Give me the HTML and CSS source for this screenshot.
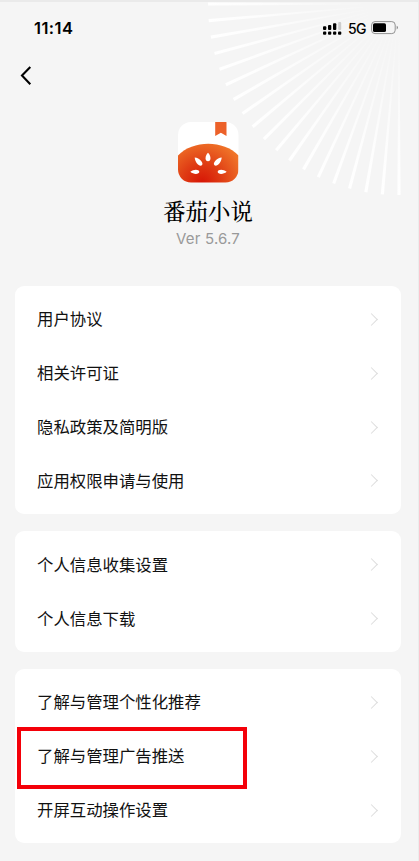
FILE: index.html
```html
<!DOCTYPE html>
<html lang="zh-CN">
<head>
<meta charset="utf-8">
<title>番茄小说</title>
<link rel="stylesheet" href="styles.css">
</head>
<body>
<div class="screen">
  <svg class="rays" width="200" height="200" viewBox="0 0 200 200" aria-hidden="true">
    <defs>
      <radialGradient id="fade" gradientUnits="userSpaceOnUse" cx="195" cy="4" r="192">
        <stop offset=".12" stop-color="#fff" stop-opacity="0"/>
        <stop offset=".75" stop-color="#fff" stop-opacity=".8"/>
        <stop offset="1" stop-color="#fff"/>
      </radialGradient>
    </defs>
    <g id="ray-group" fill="url(#fade)"></g>
  </svg>
  <header class="status">
    <span class="time">11:14</span>
    <div class="indicators">
      <svg class="signal" width="19" height="13" viewBox="0 0 19 13">
        <rect x="0" y="4.3" width="3.3" height="3.7" rx="1"/>
        <rect x="5" y="3" width="3.3" height="5" rx="1"/>
        <rect x="10" y="1.2" width="3.3" height="6.8" rx="1"/>
        <rect x="15.2" y="0" width="3" height="8" rx="1" fill="#ccc"/>
        <rect x="0" y="9.6" width="3.3" height="3.1" rx="1"/>
        <rect x="5" y="9.6" width="3.3" height="3.1" rx="1"/>
        <rect x="10" y="9.6" width="3.3" height="3.1" rx="1"/>
        <rect x="15" y="9.6" width="3.3" height="3.1" rx="1"/>
      </svg>
      <span class="network">5G</span>
      <svg class="battery" width="28" height="14" viewBox="0 0 28 14">
        <rect x=".6" y=".6" width="23.6" height="12" rx="3.4" fill="none" stroke="#929292"/>
        <rect x="2" y="2.2" width="13" height="8.8" rx="1.6"/>
        <path d="M25.7 4.8q1.3.5 1.3 1.8t-1.3 1.8z" fill="#888"/>
      </svg>
    </div>
  </header>
  <nav class="nav">
    <svg width="13" height="20" viewBox="0 0 13 20"><path d="M11.300 1 3 9.600l8.300 8.600" fill="none" stroke="#000" stroke-width="2.100"/></svg>
  </nav>
  <section class="app">
    <svg class="logo" width="61" height="61" viewBox="0 0 61 61">
      <defs>
        <clipPath id="tile"><rect width="60.500" height="60.500" rx="13"/></clipPath>
        <radialGradient id="tomato" gradientUnits="userSpaceOnUse" cx="24" cy="61" r="44">
          <stop offset="0" stop-color="#d71505"/>
          <stop offset=".45" stop-color="#df3c14"/>
          <stop offset="1" stop-color="#f07529"/>
        </radialGradient>
      </defs>
      <g clip-path="url(#tile)">
        <rect width="61" height="61" fill="#fff"/>
        <path d="M0 33.500C15 17.800 45.500 17.800 60.500 33.500V61H0Z" fill="url(#tomato)"/>
        <path d="M37.200 0H48.500V14L42.900 10.800 37.200 14Z" fill="#ec6129"/>
      </g>
      <g fill="#fff">
        <path d="M30 30.700C33.400 34 33.200 39.200 30 39.200S26.600 34 30 30.700Z"/>
        <path d="M16.700 35.500C21.500 35.800 26.200 41.300 23.900 43.200S16.900 40.500 16.700 35.500Z"/>
        <path d="M43.700 35.500C38.900 35.800 34.200 41.300 36.500 43.200S43.500 40.500 43.700 35.500Z"/>
        <path d="M12.300 49.800C15.500 46.800 21.300 47.100 21.300 49.800S15.500 52.800 12.300 49.800Z"/>
        <path d="M48.700 49.800C45.500 46.800 39.700 47.100 39.700 49.800S45.500 52.800 48.700 49.800Z"/>
      </g>
    </svg>
    <h1 class="name">番茄小说</h1>
    <p class="version">Ver 5.6.7</p>
  </section>
  <main class="cards">
    <ul class="card">
      <li class="row"><span>用户协议</span><i class="chevron"></i></li>
      <li class="row"><span>相关许可证</span><i class="chevron"></i></li>
      <li class="row"><span>隐私政策及简明版</span><i class="chevron"></i></li>
      <li class="row"><span>应用权限申请与使用</span><i class="chevron"></i></li>
    </ul>
    <ul class="card">
      <li class="row"><span>个人信息收集设置</span><i class="chevron"></i></li>
      <li class="row"><span>个人信息下载</span><i class="chevron"></i></li>
    </ul>
    <ul class="card">
      <li class="row"><span>了解与管理个性化推荐</span><i class="chevron"></i></li>
      <li class="row marked"><span>了解与管理广告推送</span><i class="chevron"></i></li>
      <li class="row"><span>开屏互动操作设置</span><i class="chevron"></i></li>
    </ul>
  </main>
</div>
<script src="rays.js"></script>
</body>
</html>
```
FILE: styles.css
```css
*, *::before { box-sizing: border-box; margin: 0; padding: 0; }
body {
  width: 419px;
  height: 861px;
  overflow: hidden;
  background: #f5f5f5;
  font-family: "Noto Sans CJK SC", sans-serif;
  color: #111;
}
.screen {
  position: relative;
  height: 861px;
  border-top: 2px solid #eaeaea;
  border-right: 1px solid #ececec;
}
svg { display: block; }
.rays { position: absolute; left: 204px; top: -2px; }
.status, .nav, .app, .cards { position: relative; }
.status {
  display: flex;
  justify-content: space-between;
  align-items: center;
  height: 52px;
  padding: 0 19px 0 34px;
  font-family: Inter, sans-serif;
  color: #000;
}
.time { font-size: 16.5px; font-weight: 600; letter-spacing: .45px; }
.indicators { display: flex; align-items: center; }
.signal { margin-top: 1px; }
.network { margin: 0 5px 0 6px; font-size: 14px; font-weight: 500; letter-spacing: -.5px; }
.nav { height: 44px; padding: 12px 0 0 19px; }
.app {
  display: flex;
  flex-direction: column;
  align-items: center;
  height: 188px;
  padding: 24px 2px 0 0;
}
.name {
  margin-top: 10px;
  font: 500 22.4px/34px "Noto Serif CJK SC", "Noto Sans CJK SC", serif;
  color: #000;
}
.version {
  margin-top: 2px;
  font: 400 15px/20px Inter, sans-serif;
  letter-spacing: .2px;
  color: #999;
}
.cards {
  display: flex;
  flex-direction: column;
  gap: 17.2px;
  padding: 0 17px 0 15px;
}
.card {
  padding: 6.4px 22px;
  list-style: none;
  background: #fff;
  border-radius: 9px;
}
.row {
  position: relative;
  display: flex;
  align-items: center;
  justify-content: space-between;
  height: 53.85px;
  font-size: 16.4px;
  line-height: 24px;
}
.row span { margin-top: -1.8px; }
.chevron {
  width: 9px;
  height: 9px;
  margin-right: 3px;
  border: solid #ddd;
  border-width: 1.5px 1.5px 0 0;
  transform: rotate(45deg);
}
.marked::before {
  content: "";
  position: absolute;
  left: -20px;
  top: -2.5px;
  width: 230px;
  height: 62px;
  border: 4px solid #f40009;
}
```
FILE: rays.js
```js
// Nineteen tapered rays, five degrees apart, fanning out from the corner.
const group = document.getElementById("ray-group");
for (let i = 0; i <= 18; i++) {
  const ray = document.createElementNS("http://www.w3.org/2000/svg", "path");
  ray.setAttribute("d", "M195 3.700 L4 2.400 V5.600 L195 4.300Z");
  ray.setAttribute("transform", `rotate(${-5 * i} 195 4)`);
  group.appendChild(ray);
}
```
